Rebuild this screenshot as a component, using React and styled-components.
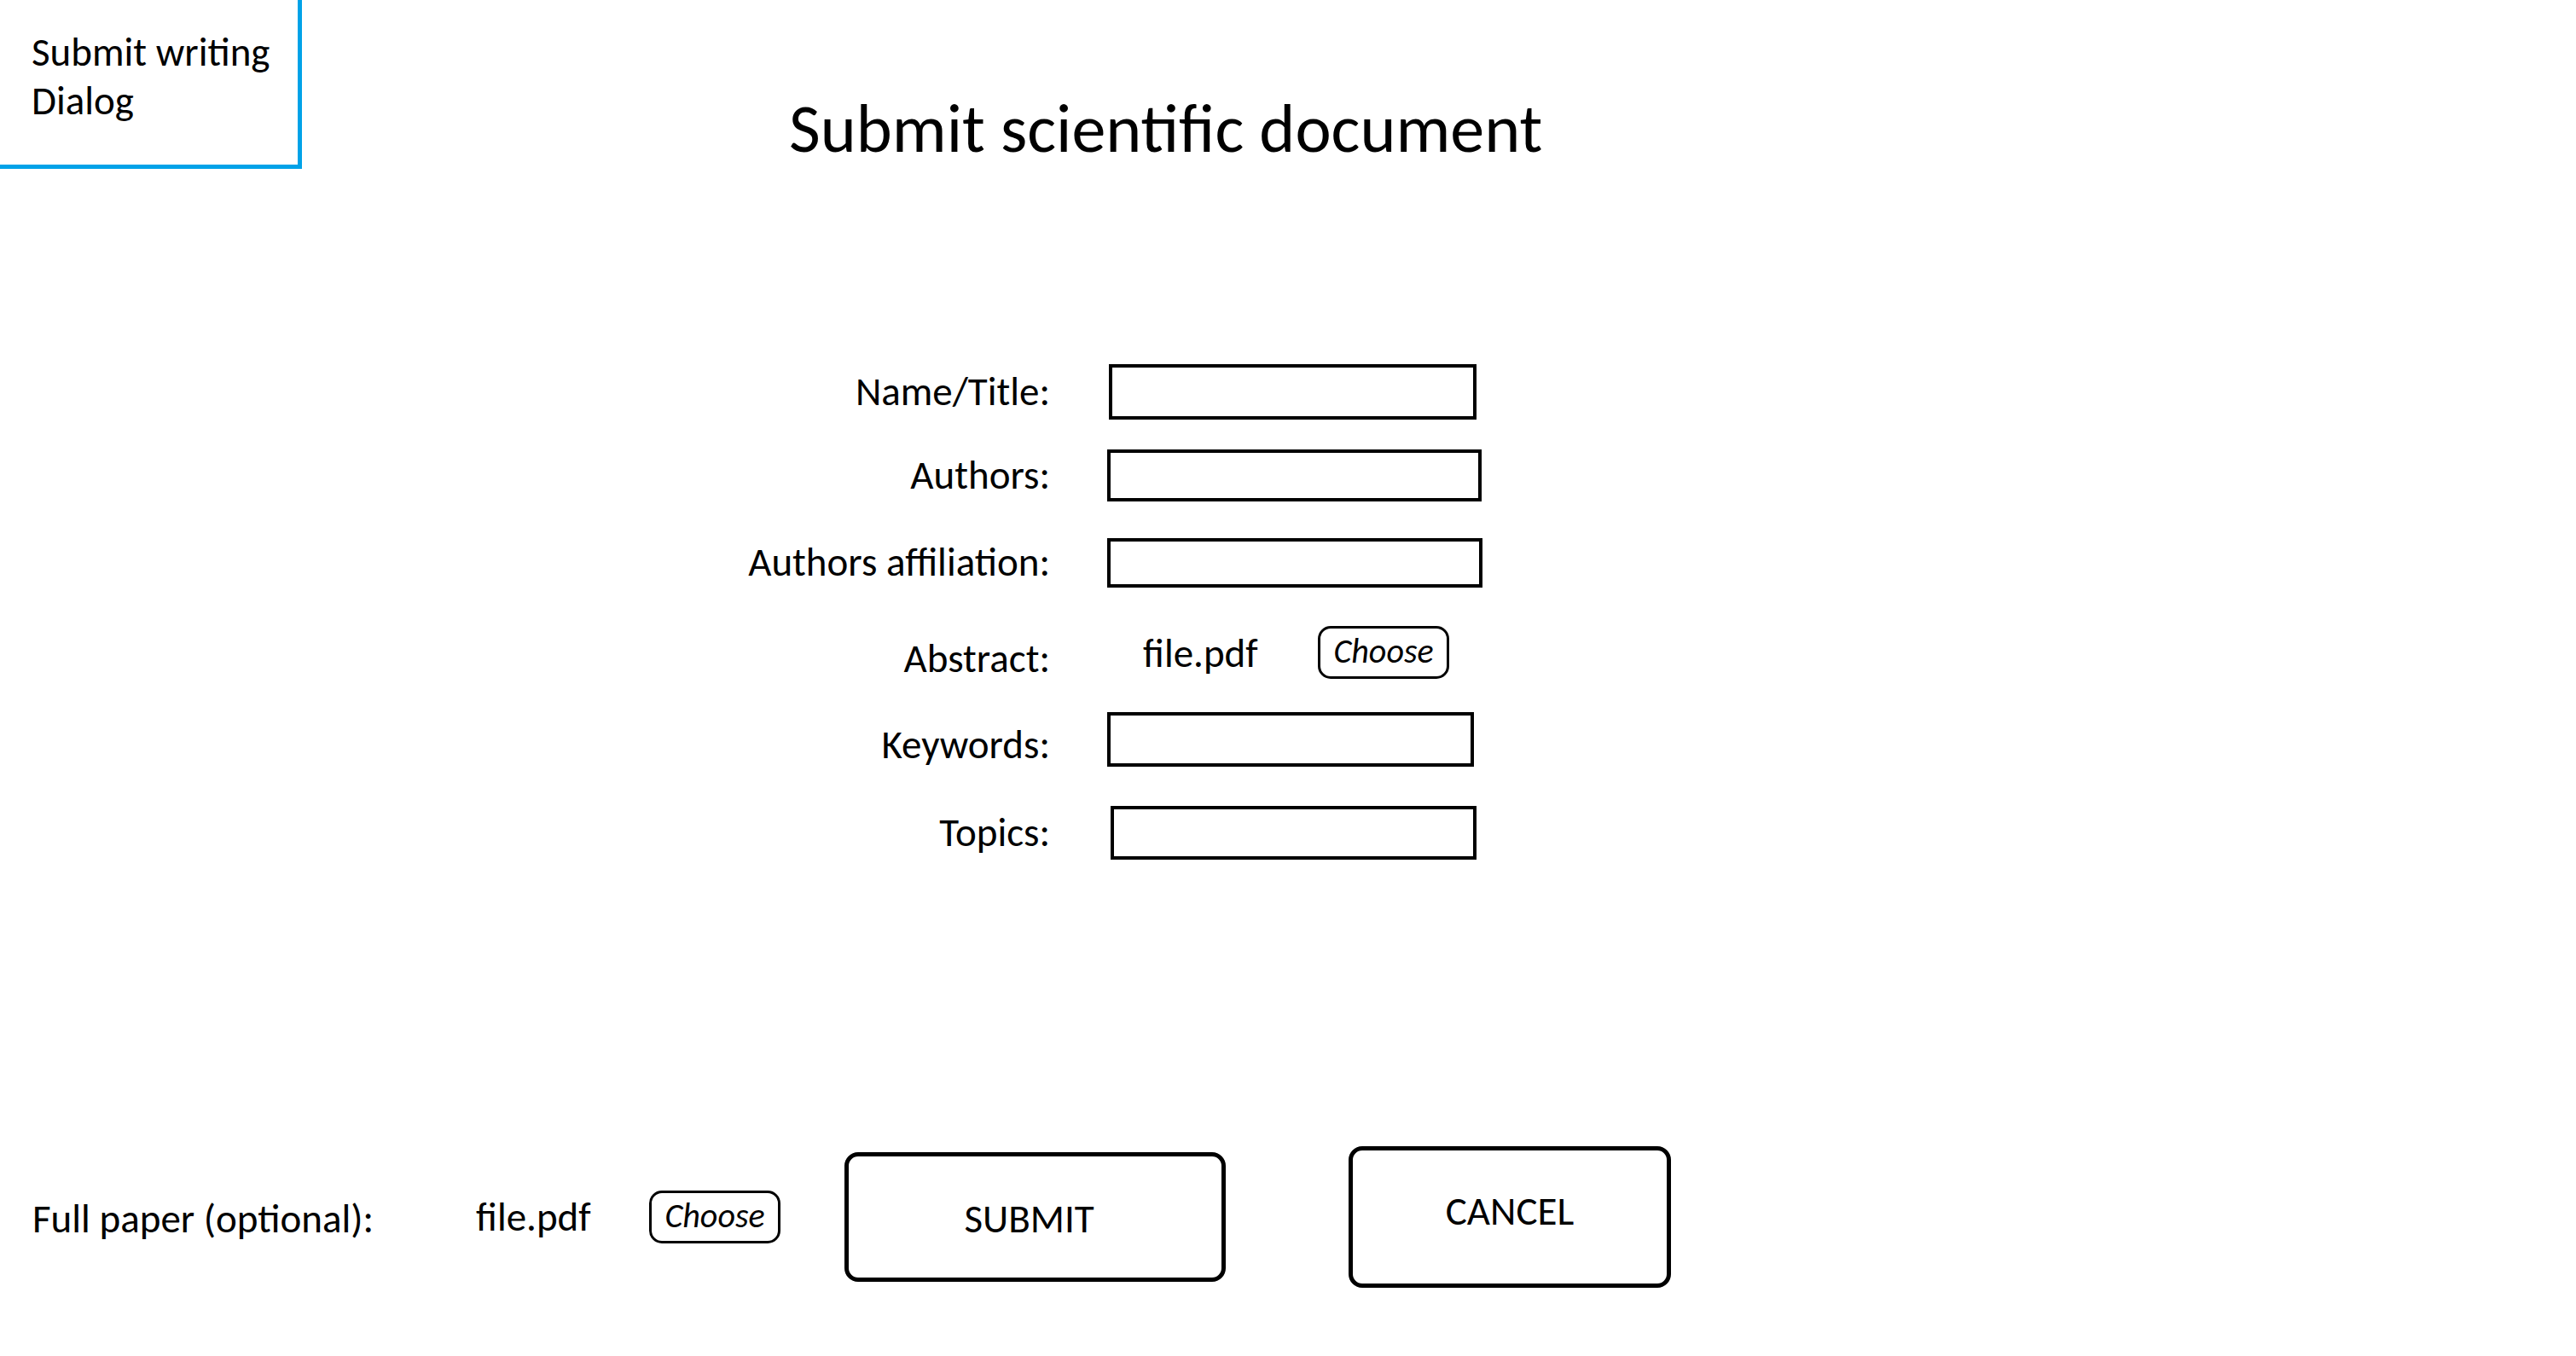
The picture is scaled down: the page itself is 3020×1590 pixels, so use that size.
import React from "react";
import styled, { createGlobalStyle } from "styled-components";

const Global = createGlobalStyle`
  html, body { margin: 0; padding: 0; background: #fff; }
  body { font-family: "Carlito", "Lato", "Liberation Sans", sans-serif; color: #000; }
  * { box-sizing: border-box; }
`;

const Page = styled.div`
  width: 3020px;
  height: 1590px;
  display: flex;
  flex-direction: column;
  background: #fff;
  font-size: 47px;
`;

const Header = styled.header`
  display: flex;
  align-items: flex-start;
`;

const NoteBox = styled.div`
  width: 354px;
  height: 198px;
  border-right: 5px solid #00a2e8;
  border-bottom: 5px solid #00a2e8;
  padding: 33px 0 0 37px;
  font-size: 47px;
  line-height: 57px;
`;

const Title = styled.h1`
  margin: 111px 0 0 571px;
  font-size: 80px;
  font-weight: 400;
  line-height: 1;
  white-space: nowrap;
`;

const Form = styled.div`
  display: grid;
  grid-template-columns: 1231px 440px;
  column-gap: 67px;
  margin-top: 212px;
`;

const Label = styled.div`
  grid-column: 1;
  height: ${(p) => p.$h}px;
  display: flex;
  align-items: center;
  justify-content: flex-end;
  font-size: 47px;
  line-height: 57px;
  white-space: nowrap;
  padding-top: ${(p) => p.$down || 0}px;
`;

const Cell = styled.div`
  grid-column: 2;
  height: ${(p) => p.$h}px;
  display: flex;
  align-items: center;
`;

const TextBox = styled.div`
  width: ${(p) => p.$w}px;
  height: ${(p) => p.$ht}px;
  border: 4px solid #000;
  background: #fff;
  margin-left: ${(p) => p.$x || 0}px;
`;

const FilePick = styled.div`
  display: grid;
  grid-template-columns: ${(p) => p.$cols};
  align-items: center;
  padding-left: ${(p) => p.$pad || 0}px;
`;

const FileName = styled.span`
  font-size: 47px;
  line-height: 57px;
  white-space: nowrap;
  padding-top: ${(p) => p.$down || 0}px;
`;

const ChooseButton = styled.button`
  width: 154px;
  height: 62px;
  border: 3px solid #000;
  border-radius: 15px;
  background: #fff;
  font-family: inherit;
  font-style: italic;
  font-size: 40px;
  line-height: 1;
  padding: 0 0 2px;
  color: #000;
`;

const BottomBar = styled.div`
  margin-top: auto;
  margin-bottom: 80px;
  height: 166px;
  display: grid;
  grid-template-columns: 520px 203px 229px 591px 378px;
  align-items: center;
  padding-left: 38px;
`;

const ActionButton = styled.button`
  width: ${(p) => p.$w}px;
  height: ${(p) => p.$h}px;
  border: 5px solid #000;
  border-radius: 16px;
  background: #fff;
  font-family: inherit;
  font-size: 47px;
  color: #000;
  padding: ${(p) => p.$drop || 0}px ${(p) => p.$shift || 0}px ${(p) => p.$lift || 0}px 0;
`;

const rows = [
  { label: "Name/Title:", h: 98, box: { w: 431, h: 65, x: 2 }, down: -4 },
  { label: "Authors:", h: 99, box: { w: 439, h: 61, x: 0 } },
  { label: "Authors affiliation:", h: 105, box: { w: 445, h: 58, x: 0 } },
  { label: "Abstract:", h: 105, file: true, down: 16 },
  { label: "Keywords:", h: 100, box: { w: 430, h: 64, x: 0 }, down: 12 },
  { label: "Topics:", h: 118, box: { w: 429, h: 63, x: 4 } },
];

export default function App() {
  return (
    <Page>
      <Global />
      <Header>
        <NoteBox>
          Submit writing
          <br />
          Dialog
        </NoteBox>
        <Title>Submit scientific document</Title>
      </Header>

      <Form>
        {rows.map((r) => (
          <React.Fragment key={r.label}>
            <Label $h={r.h} $down={r.down}>{r.label}</Label>
            <Cell $h={r.h}>
              {r.file ? (
                <FilePick $cols="205px 154px" $pad={42}>
                  <FileName $down={4}>file.pdf</FileName>
                  <ChooseButton>Choose</ChooseButton>
                </FilePick>
              ) : (
                <TextBox $w={r.box.w} $ht={r.box.h} $x={r.box.x} />
              )}
            </Cell>
          </React.Fragment>
        ))}
      </Form>

      <BottomBar>
        <FileName $down={4}>Full paper (optional):</FileName>
        <FileName>file.pdf</FileName>
        <ChooseButton>Choose</ChooseButton>
        <ActionButton $w={447} $h={152} $shift={14} $drop={4}>SUBMIT</ActionButton>
        <ActionButton $w={378} $h={166} $lift={14}>CANCEL</ActionButton>
      </BottomBar>
    </Page>
  );
}
